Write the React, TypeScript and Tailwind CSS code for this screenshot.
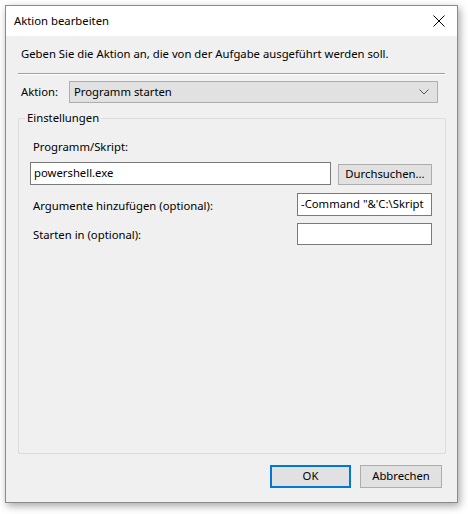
import React from "react";

export default function App() {
  const font = { fontFamily: '"Segoe UI", "Noto Sans", "Open Sans", sans-serif' };
  return (
    <div className="w-[468px] h-[514px] bg-white pl-[5px] pt-[5px]" style={font}>
      <div className="w-[453px] h-[498px] flex flex-col border border-[#8a8a8a] bg-[#f0f0f0] shadow-[2px_3px_8px_rgba(0,0,0,0.35)] text-[11.3px] text-black">
        {/* title bar */}
        <div className="h-[30px] bg-white flex items-center justify-between pl-[8px] pr-[10px] shrink-0">
          <span className="text-[11.3px] leading-none">Aktion bearbeiten</span>
          <svg width="12" height="12" viewBox="0 0 12 12" className="mr-[2px]">
            <path d="M0.5 0.5 L11.5 11.5 M11.5 0.5 L0.5 11.5" stroke="#000" strokeWidth="1" />
          </svg>
        </div>
        {/* content */}
        <div className="flex-1 flex flex-col px-[12px]">
          <div className="pt-[10px] pl-[3px] leading-[16px]">Geben Sie die Aktion an, die von der Aufgabe ausgeführt werden soll.</div>
          <div className="mt-[11px] border-t border-[#a0a0a0] border-b border-b-white h-[2px]" />
          <div className="flex items-center mt-[6px] pl-[3px]">
            <span className="w-[48px]">Aktion:</span>
            <div className="w-[369px] h-[22px] bg-[#e1e1e1] border border-[#adadad] flex items-center justify-between pl-[4px] pr-[8px]">
              <span>Programm starten</span>
              <svg width="10" height="6" viewBox="0 0 10 6">
                <path d="M0.5 0.5 L5 5 L9.5 0.5" fill="none" stroke="#555" strokeWidth="1" />
              </svg>
            </div>
          </div>
          {/* group box */}
          <div className="relative mt-[15px] h-[336px] w-[428px] border border-[#dcdcdc] rounded-[2px]">
            <span className="absolute -top-[9px] left-[6px] px-[2px] bg-[#f0f0f0] leading-[16px]">Einstellungen</span>
            <div className="flex flex-col pl-[11px] pt-[20px]">
              <span className="pl-[3px] leading-[16px]">Programm/Skript:</span>
              <div className="flex items-center mt-[7px]">
                <div className="w-[301px] h-[23px] bg-white border border-[#7a7a7a] flex items-center pl-[3px]">powershell.exe</div>
                <div className="ml-[7px] w-[94px] h-[21px] bg-[#e1e1e1] border border-[#adadad] flex items-center justify-center mt-[2px]">Durchsuchen...</div>
              </div>
              <div className="flex items-center mt-[8px]">
                <span className="w-[267px] pl-[3px] pt-[3px]">Argumente hinzufügen (optional):</span>
                <div className="w-[135px] h-[23px] bg-white border border-[#7a7a7a] flex items-center pl-[3px] overflow-hidden whitespace-nowrap">-Command "&amp;'C:\Skript</div>
              </div>
              <div className="flex items-center mt-[7px]">
                <span className="w-[267px] pl-[3px] pt-[3px]">Starten in (optional):</span>
                <div className="w-[135px] h-[22px] bg-white border border-[#7a7a7a]" />
              </div>
            </div>
          </div>
          <div className="flex justify-end mt-[11px] pr-[3px] gap-[9px]">
            <div className="w-[81px] h-[23px] bg-[#e1e1e1] border-2 border-[#0078d7] flex items-center justify-center">OK</div>
            <div className="w-[82px] h-[23px] bg-[#e1e1e1] border border-[#adadad] flex items-center justify-center">Abbrechen</div>
          </div>
        </div>
      </div>
    </div>
  );
}
